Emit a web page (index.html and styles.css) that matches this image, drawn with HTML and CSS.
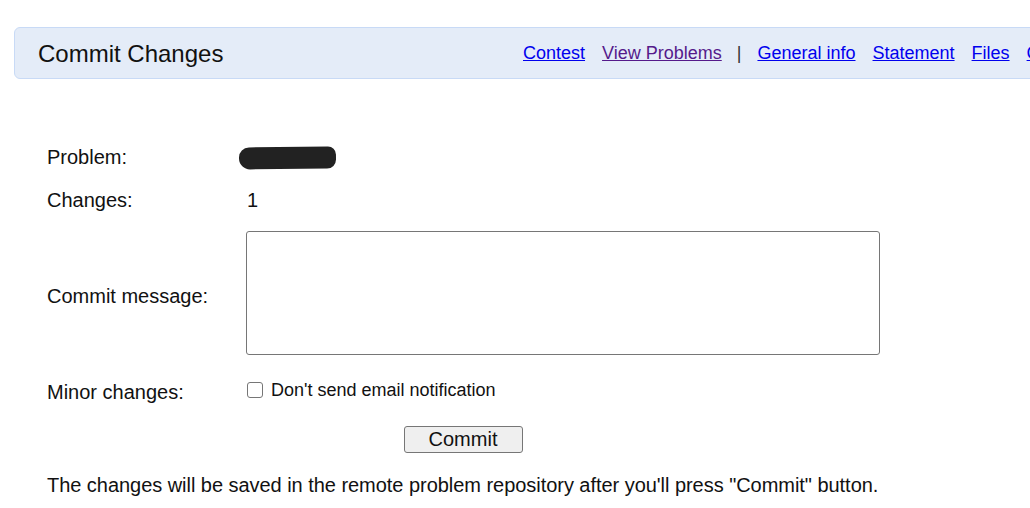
FILE: index.html
```html
<!DOCTYPE html>
<html>
<head>
<meta charset="utf-8">
<link rel="stylesheet" href="styles.css">
</head>
<body>
<div class="page">
  <div class="header">
    <div class="title">Commit Changes</div>
    <nav class="menu">
      <a href="#c" class="link">Contest</a>
      <a href="#v" class="link visited">View Problems</a>
      <span class="sep">|</span>
      <a href="#g" class="link">General info</a>
      <a href="#s" class="link">Statement</a>
      <a href="#f" class="link">Files</a>
      <a href="#k" class="link">Checker</a>
      <a href="#va" class="link">Validator</a>
    </nav>
  </div>

  <div class="form">
    <div class="label row-a">Problem:</div>
    <div class="value row-a"><span class="redacted"></span></div>

    <div class="label row-a">Changes:</div>
    <div class="value row-a">1</div>

    <div class="label row-msg">Commit message:</div>
    <div class="value row-msg"><textarea class="message"></textarea></div>

    <div class="label row-minor">Minor changes:</div>
    <div class="value row-minor check-line">
      <input type="checkbox" id="minor" class="check">
      <label for="minor" class="check-label">Don't send email notification</label>
    </div>

    <div class="actions"><button class="commit">Commit</button></div>
  </div>

  <p class="note">The changes will be saved in the remote problem repository after you'll press "Commit" button.</p>
</div>
</body>
</html>
```

FILE: styles.css
```css
html, body {
  margin: 0;
  padding: 0;
  background: #ffffff;
  overflow: hidden;
}
body {
  font-family: Arial, "Liberation Sans", sans-serif;
  color: #111;
  font-size: 20px;
}
.page {
  padding: 27px 0 0 14px;
  width: 1200px;
}
.header {
  display: flex;
  align-items: center;
  height: 49px;
  background: #e4ecf8;
  border: 1px solid #c8daf6;
  border-radius: 6px 0 0 6px;
  padding-left: 23px;
  padding-top: 1px;
  box-sizing: content-box;
}
.title {
  font-size: 24px;
  color: #111;
  width: 485px;
}
.menu {
  display: flex;
  align-items: center;
  gap: 17px;
  font-size: 18px;
  white-space: nowrap;
}
.link {
  color: #0000ee;
  text-decoration: underline;
}
.link.visited {
  color: #551a8b;
}
.sep {
  color: #333;
  margin: 0 -1px 0 -2px;
}
.form {
  display: grid;
  grid-template-columns: 200px 634px;
  margin: 57px 0 0 33px;
  width: 834px;
}
.label, .value {
  display: flex;
  align-items: center;
}
.row-a {
  height: 43px;
}
.row-msg {
  padding-top: 9px;
}
.label.row-msg {
  padding-top: 15px;
}
.message {
  display: block;
  width: 634px;
  height: 124px;
  box-sizing: border-box;
  border: 1px solid #767676;
  border-radius: 3px;
  margin: 0 0 0 -1px;
  resize: none;
  font: inherit;
}
.row-minor {
  height: 50px;
  margin-top: 10px;
  box-sizing: border-box;
}
.label.row-minor {
  padding-top: 5px;
}
.check-line {
  gap: 8px;
}
.check {
  appearance: none;
  -webkit-appearance: none;
  width: 16px;
  height: 16px;
  margin: 0;
  box-sizing: border-box;
  border: 1.5px solid #767676;
  border-radius: 3px;
  background: #fff;
}
.check:checked {
  background: #0075ff;
  border-color: #0075ff;
}
.check-label {
  font-size: 18px;
}
.redacted {
  display: block;
  width: 97px;
  height: 22px;
  margin-left: -8px;
  background: #222;
  border-radius: 10px 8px 9px 11px;
  transform: rotate(-0.6deg);
}
.actions {
  grid-column: 1 / 3;
  display: flex;
  justify-content: center;
  padding-top: 11px;
  padding-right: 2px;
}
.commit {
  height: 27px;
  width: 119px;
  padding: 0;
  font: inherit;
  font-size: 20px;
  color: #111;
  background: #efefef;
  border: 1px solid #767676;
  border-radius: 3px;
}
.note {
  margin: 21px 0 0 33px;
  line-height: 23px;
  letter-spacing: -0.04px;
}
```
